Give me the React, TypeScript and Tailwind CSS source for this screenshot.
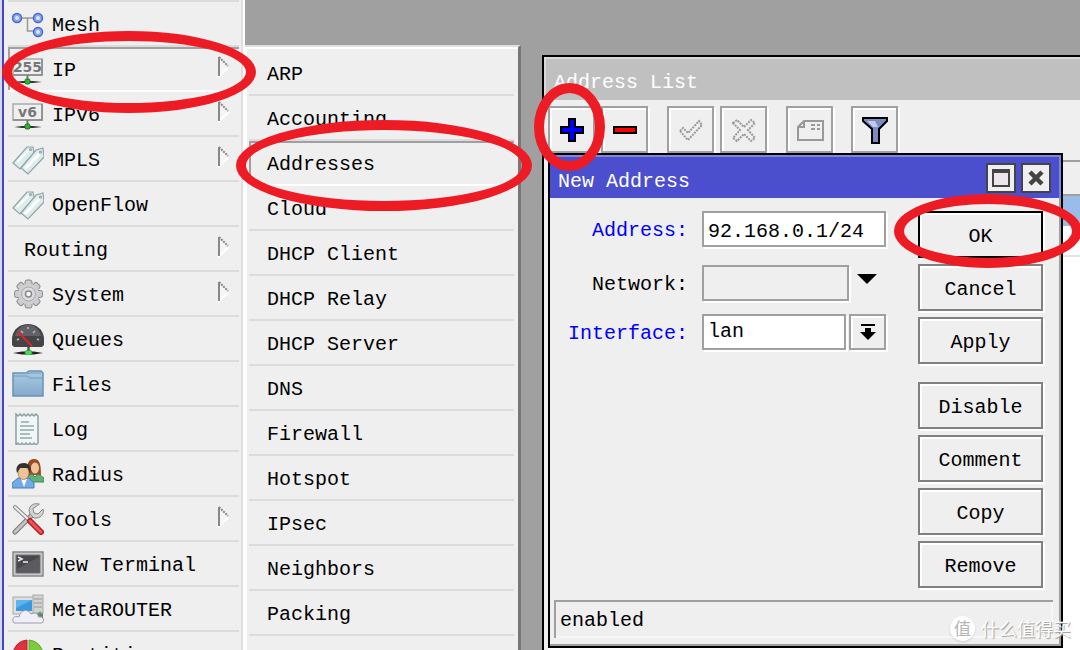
import type { ReactNode } from "react";

const menuItems: { label: string; icon?: ReactNode; sub?: boolean; active?: boolean }[] = [
  { label: "Mesh", icon: <MeshIcon /> },
  { label: "IP", icon: <NetIcon text="255" />, sub: true, active: true },
  { label: "IPv6", icon: <NetIcon text="v6" />, sub: true },
  { label: "MPLS", icon: <TagsIcon />, sub: true },
  { label: "OpenFlow", icon: <TagsIcon /> },
  { label: "Routing", sub: true },
  { label: "System", icon: <GearIcon />, sub: true },
  { label: "Queues", icon: <GaugeIcon /> },
  { label: "Files", icon: <FolderIcon /> },
  { label: "Log", icon: <LogIcon /> },
  { label: "Radius", icon: <UsersIcon /> },
  { label: "Tools", icon: <ToolsIcon />, sub: true },
  { label: "New Terminal", icon: <TerminalIcon /> },
  { label: "MetaROUTER", icon: <ComputerIcon /> },
  { label: "Partition", icon: <PieIcon /> },
];

const ipItems = [
  "ARP",
  "Accounting",
  "Addresses",
  "Cloud",
  "DHCP Client",
  "DHCP Relay",
  "DHCP Server",
  "DNS",
  "Firewall",
  "Hotspot",
  "IPsec",
  "Neighbors",
  "Packing",
  "Pool",
];

function MeshIcon() {
  return (
    <svg viewBox="0 0 32 32" className="size-8">
      <path d="M6 10H26M15.500 10V23H26" fill="none" stroke="#999" strokeWidth="1.500" />
      {[[5, 10], [26, 10], [26, 24]].map(([x, y]) => (
        <g key={`${x}-${y}`}>
          <circle cx={x} cy={y} r="4.500" fill="#86a6ef" stroke="#4a68cf" strokeWidth="1.500" />
          <circle cx={x} cy={y} r="2" fill="#dce6ff" />
        </g>
      ))}
    </svg>
  );
}

function NetIcon({ text }: { text: string }) {
  return (
    <svg viewBox="0 0 32 32" className="size-8">
      <rect x="1" y="6" width="29" height="16" fill="#efefef" stroke="#aaa" strokeWidth="1.500" />
      <path d="M1 22H30V6" fill="none" stroke="#888" strokeWidth="1.500" />
      <text x="15.500" y="19" textAnchor="middle" fontSize="14" fontWeight="bold" fontFamily="DejaVu Sans, sans-serif" fill="#777">
        {text}
      </text>
      <path d="M15.500 22V28" stroke="#777" strokeWidth="2" />
      <path d="M2 29L10 28H21L30 29L21 30H10Z" fill="#333" />
      <rect x="13" y="26" width="5" height="5" rx="1.500" fill="#35b235" stroke="#18711c" />
    </svg>
  );
}

function TagsIcon() {
  return (
    <svg viewBox="0 0 32 32" className="size-8" fill="#dfecec" stroke="#8fa5a8" strokeWidth="1.200">
      <path d="M1 20L15 4L21 4L22 10L8 26Z" />
      <path d="M5 19L17 7" stroke="#fff" strokeWidth="2" />
      <path d="M9 25L24 7L31 5L32 14L16 31Z" />
      <path d="M13 26L27 11" stroke="#fff" strokeWidth="3" />
      <circle cx="18.500" cy="6.500" r="1" fill="#fff" />
      <circle cx="28.500" cy="9" r="1" fill="#fff" />
    </svg>
  );
}

function GearIcon() {
  return (
    <svg viewBox="0 0 32 32" className="size-8">
      {[0, 45, 90, 135].map((a) => (
        <rect key={a} x="13" y="2" width="7" height="28" rx="2" fill="#ccc" stroke="#888" transform={`rotate(${a} 16.500 16)`} />
      ))}
      <circle cx="16.500" cy="16" r="10.500" fill="#cfcfd3" />
      <circle cx="16.500" cy="16" r="7" fill="#dcdce0" stroke="#aaa" />
      <circle cx="16.500" cy="16" r="3" fill="#fff" stroke="#888" strokeWidth="1.500" />
    </svg>
  );
}

function GaugeIcon() {
  return (
    <svg viewBox="0 0 32 32" className="size-8">
      <path d="M0 22V15C1 6 8 1 16 1S31 6 32 15V22L30 24H2Z" fill="#454549" />
      <path d="M3 13C5 6 10 2 16 2S27 6 29 13Z" fill="#626266" />
      <path d="M5 17L7 16M9 8L11 10M16 4V6M23 8L21 10M27 17L25 16" stroke="#bbb" strokeWidth="1.500" />
      <path d="M6 9L20 23" stroke="#e32222" strokeWidth="2" />
      <path d="M16.500 24V29" stroke="#555" strokeWidth="2.500" />
      <path d="M1 30L10 28.500H22L31 30L22 31.500H10Z" fill="#222" />
      <rect x="13" y="27.500" width="7" height="4.500" rx="2" fill="#43dc52" stroke="#239330" strokeWidth=".7" />
    </svg>
  );
}

function FolderIcon() {
  return (
    <svg viewBox="0 0 32 32" className="size-8">
      <defs>
        <linearGradient id="folder" x2="0" y2="1">
          <stop stopColor="#a9cbe2" />
          <stop offset="1" stopColor="#86a9ce" />
        </linearGradient>
      </defs>
      <path d="M1 5H14L17 3H29L31 5V28H1Z" fill="url(#folder)" stroke="#6992b1" strokeWidth="1.500" />
      <path d="M2 8H15L18 10H30M15 6L18 5H29" fill="none" stroke="#719eba" />
    </svg>
  );
}

function LogIcon() {
  return (
    <svg viewBox="0 0 32 32" className="size-8">
      <path d="M4 1L6 3L8 1L10 3L12 1L14 3L16 1L18 3L20 1L22 3L24 1L26 3V30L24 32L22 30L20 32L18 30L16 32L14 30L12 32L10 30L8 32L6 30L4 32Z" fill="#f0f7f6" stroke="#8ba2a1" strokeWidth="1.500" />
      <path d="M9 9H17M8 13H22M8 17H22M8 21H18M8 25H20" stroke="#91aaa9" strokeWidth="1.500" />
    </svg>
  );
}

function UsersIcon() {
  return (
    <svg viewBox="0 0 32 32" className="size-8">
      <path d="M16 14C15 6 16 1 22 1S29 7 29 17H16Z" fill="#9d4b23" />
      <ellipse cx="23" cy="10" rx="4" ry="5.500" fill="#f0c59b" />
      <path d="M13 24L16 18L20 16L23 19L26 16L32 20V24Z" fill="#5cb078" stroke="#43895a" />
      <path d="M0 30V25L6 20H17L22 25V30Z" fill="#72aae5" stroke="#477fc0" />
      <path d="M9 21L12 29L15 21Z" fill="#fff" />
      <ellipse cx="11.500" cy="15" rx="5.500" ry="6.500" fill="#efc393" stroke="#966743" strokeWidth=".7" />
      <path d="M5 15C3 8 7 5 12 5S20 9 18 15L16 10H8Z" fill="#33302f" />
    </svg>
  );
}

function ToolsIcon() {
  return (
    <svg viewBox="0 0 32 32" className="size-8" strokeLinecap="round">
      <path d="M3 29L20 12" stroke="#777" strokeWidth="5" />
      <path d="M3 29L20 12" stroke="#c2c2c2" strokeWidth="3" />
      <path d="M27 1C20 -1 15 5 18 11L22 15C28 16 33 11 31 6L26 11L22 10L21 6Z" fill="#d3d3d3" stroke="#888" />
      <path d="M3 4L17 17" stroke="#888" strokeWidth="4" />
      <path d="M3 4L17 17" stroke="#ededed" strokeWidth="2" />
      <path d="M18 18L29 29" stroke="#b91e1e" strokeWidth="6" />
      <path d="M18 18L29 29" stroke="#ee5555" strokeWidth="3" />
    </svg>
  );
}

function TerminalIcon() {
  return (
    <svg viewBox="0 0 32 32" className="size-8">
      <rect x="1" y="4" width="30" height="24" fill="#c9c9c9" stroke="#888" strokeWidth="1.500" />
      <rect x="4" y="7" width="24" height="18" fill="#48484c" stroke="#777" />
      <path d="M5 21L27 9V24H5Z" fill="#5b5b60" />
      <path d="M6 9L10 11L6 13M11 14H16" stroke="#eee" strokeWidth="1.500" fill="none" />
    </svg>
  );
}

function ComputerIcon() {
  return (
    <svg viewBox="0 0 32 32" className="size-8">
      <rect x="1" y="4" width="22" height="17" fill="#dedede" stroke="#aaa" />
      <rect x="4" y="7" width="16" height="11" fill="#3899df" />
      <path d="M4 7H20L4 15Z" fill="#5fb4eb" />
      <path d="M24 19H31V26H24Z" fill="#777" />
      <rect x="21" y="2" width="10" height="18" fill="#d2d2d2" stroke="#aaa" />
      <path d="M22 6H30M22 10H30M22 14H30" stroke="#999" />
      <circle cx="28" cy="20" r="1.500" fill="#34c144" />
      <path d="M2 30C-1 26 2 22 7 24C8 17 16 15 19 21C25 18 27 23 26 24C32 23 33 28 30 30Z" fill="#efeff8" stroke="#9c9cb2" />
    </svg>
  );
}

function PieIcon() {
  return (
    <svg viewBox="0 0 32 32" className="size-8">
      <path d="M15 16V2A15 15 0 0 0 1 16Z" fill="#e0323c" stroke="#bd1f30" />
      <path d="M17 16V2A15 15 0 0 1 31 16Z" fill="#7fcb40" stroke="#5da62e" />
      <path d="M1 17H15V31A15 15 0 0 1 1 17Z" fill="#e8c83a" />
      <path d="M17 17H31A15 15 0 0 1 17 31Z" fill="#4a8fe0" />
    </svg>
  );
}

function SubArrow() {
  return (
    <svg viewBox="0 0 14 22" className="mb-1 ml-auto mr-2 h-[22px] w-[14px]" fill="none" strokeWidth="2">
      <path d="M3 4L12 11L2 20Z" fill="#f5f5f5" />
      <path d="M1 21L12 11" stroke="#fff" />
      <path d="M2 1V20" stroke="#888" />
      <path d="M2 1L11 10" stroke="#888" strokeDasharray="2 1" />
    </svg>
  );
}

function ToolButton({ label, className = "", children }: { label: string; className?: string; children: ReactNode }) {
  return (
    <button
      aria-label={label}
      className={`flex size-[47px] items-center justify-center border-2 border-[#a0a0a0] bg-[#efefef] shadow-[2px_2px_0_#fff,inset_2px_2px_0_#fff] ${className}`}
    >
      <svg viewBox="0 0 28 28" className="size-7">
        {children}
      </svg>
    </button>
  );
}

function DialogButton({ label, primary, className = "" }: { label: string; primary?: boolean; className?: string }) {
  return (
    <button
      className={`h-[47px] border-2 bg-[#efefef] pt-1 shadow-[2px_2px_0_#fff,inset_2px_2px_0_#fff] ${primary ? "border-black" : "border-[#808080]"} ${className}`}
    >
      {label}
    </button>
  );
}

function Ring({ className }: { className: string }) {
  return <div className={`pointer-events-none absolute rounded-[50%] border-[10px] border-[#ed1c24] ${className}`} />;
}

function Sidebar() {
  return (
    <nav className="flex w-[245px] shrink-0 border-r-2 border-r-white bg-[#d5d9e5] pl-[2px]">
      <div className="w-full border-l-2 border-[#4444c8] bg-[#efefef] pl-1 pr-1 shadow-[inset_-2px_0_0_#dfdfdf]">
        <ul className="border-t-2 border-[#dcdcdc]">
          {menuItems.map((item) => (
            <li
              key={item.label}
              className={`h-[45px] border-b-2 ${item.active ? "border-b-white shadow-[inset_2px_2px_0_#a0a0a0]" : "border-[#dcdcdc]"}`}
            >
              <a href="#" className={`flex h-full items-center gap-2 ${item.icon ? "pl-1" : "pl-4"}`}>
                {item.icon}
                <span className="pt-1">{item.label}</span>
                {item.sub && <SubArrow />}
              </a>
            </li>
          ))}
        </ul>
      </div>
    </nav>
  );
}

function IpMenu() {
  return (
    <nav className="mt-[45px] w-[276px] shrink-0 border-r-[3px] border-t-2 border-r-[#777] border-t-[#dfdfdf] bg-[#efefef] pl-1 pr-1 pt-1 shadow-[inset_2px_2px_0_#fff]">
      <ul>
        {ipItems.map((item) => (
          <li
            key={item}
            className={`h-[45px] border-b-2 ${item === "Addresses" ? "border-b-white shadow-[inset_2px_2px_0_#a0a0a0]" : "border-[#dcdcdc]"}`}
          >
            <a href="#" className="flex h-full items-center pl-[18px] pt-1">
              {item}
            </a>
          </li>
        ))}
      </ul>
    </nav>
  );
}

function NewAddress() {
  return (
    <section className="absolute left-1 top-[96px] flex w-[515px] flex-col border-2 border-black bg-[#efefef] shadow-[inset_-2px_-2px_0_#a0a0a0]">
      <header className="flex h-[43px] items-center justify-between border-r-2 border-t-2 border-[#8585d8] bg-[#4c4fcd] px-2 text-white">
        <h2 className="pt-2">New Address</h2>
        <div className="flex gap-[5px]">
          <button aria-label="Maximize" className="flex size-[30px] items-center justify-center border-2 border-[#444] bg-[#efefef]">
            <span className="size-[18px] border-2 border-t-4 border-[#444] bg-[#ece6ec]" />
          </button>
          <button aria-label="Close" className="flex size-[30px] items-center justify-center border-2 border-[#444] bg-[#efefef]">
            <svg viewBox="0 0 16 16" className="size-4">
              <path d="M2 2L14 14M14 2L2 14" stroke="#444" strokeWidth="4.500" />
            </svg>
          </button>
        </div>
      </header>
      <div className="flex justify-between pb-3 pl-4 pr-[18px] pt-[13px]">
        <form className="grid grid-cols-[122px_184px] content-start gap-x-[14px]">
          <label htmlFor="address" className="h-[54px] pt-[6px] text-right text-[#0000ff]">Address:</label>
          <input id="address" defaultValue="92.168.0.1/24" className="h-9 w-full border-2 border-[#a0a0a0] bg-white px-1 pt-1 shadow-[2px_2px_0_#fff]" />
          <label htmlFor="network" className="h-[49px] pt-[6px] text-right">Network:</label>
          <div className="flex gap-2">
            <input id="network" className="h-9 w-[147px] border-2 border-[#a0a0a0] bg-[#efefef] px-1 shadow-[2px_2px_0_#fff]" />
            <button type="button" aria-label="Show network" className="flex h-7 w-5 items-center justify-center">
              <svg viewBox="0 0 20 10" className="h-[10px] w-5">
                <path d="M0 0H20L10 10Z" />
              </svg>
            </button>
          </div>
          <label htmlFor="interface" className="pt-[6px] text-right text-[#0000ff]">Interface:</label>
          <div className="flex justify-between">
            <select id="interface" className="h-9 w-36 appearance-none border-2 border-[#a0a0a0] bg-white px-1 shadow-[2px_2px_0_#fff]">
              <option>lan</option>
            </select>
            <button type="button" aria-label="Choose interface" className="flex h-9 w-[37px] items-center justify-center border-2 border-[#a0a0a0] shadow-[2px_2px_0_#fff,inset_2px_2px_0_#fff]">
              <svg viewBox="0 0 16 18" className="h-[18px] w-4">
                <path d="M1 1H15V3H1ZM5 5H11V9H16L8 17L0 9H5Z" />
              </svg>
            </button>
          </div>
        </form>
        <div className="flex w-[125px] flex-col gap-[6px]">
          <DialogButton label="OK" primary />
          <DialogButton label="Cancel" />
          <DialogButton label="Apply" />
          <DialogButton label="Disable" className="mt-3" />
          <DialogButton label="Comment" />
          <DialogButton label="Copy" />
          <DialogButton label="Remove" />
        </div>
      </div>
      <footer className="mb-2 ml-1 mr-2 h-[38px] border-l-2 border-t-2 border-[#a0a0a0] px-1 leading-[38px] shadow-[inset_-2px_-2px_0_#f7f7f7]">
        enabled
      </footer>
    </section>
  );
}

function AddressList() {
  return (
    <section className="relative ml-[21px] mt-[55px] flex grow flex-col border-l-2 border-t-2 border-black bg-[#efefef]">
      <header className="h-[43px] border-l-2 border-t-2 border-[#d8d8d8] bg-[#c0c0c0] pl-2 leading-[48px] text-white">
        <h1>Address List</h1>
      </header>
      <div className="flex h-[60px] shrink-0 pl-1 pt-[6px]">
        <ToolButton label="Add">
          <path d="M11 3H17V11H25V17H17V25H11V17H3V11H11Z" fill="#00f" stroke="#000" strokeWidth="2" />
        </ToolButton>
        <ToolButton label="Remove" className="ml-[6px]">
          <path d="M3 11H25V17H3Z" fill="#f00" stroke="#000" strokeWidth="2" />
        </ToolButton>
        <ToolButton label="Enable" className="ml-[19px]">
          <path d="M3 15L6 12L11 17L22 5L25 9L11 24Z" fill="none" stroke="#999" strokeWidth="2" strokeDasharray="2 1" />
        </ToolButton>
        <ToolButton label="Disable" className="ml-[6px]">
          <path d="M3 7L7 4L14 11L21 4L25 7L18 14L25 22L21 25L14 18L7 25L3 22L10 14Z" fill="none" stroke="#999" strokeWidth="2" strokeDasharray="2 1" />
        </ToolButton>
        <ToolButton label="Comment" className="ml-[19px]">
          <path d="M2 11L8 5H27V24H2ZM8 5V11H2M15 9H19M21 9H24M15 13H19M21 13H24" fill="none" stroke="#999" strokeWidth="2" />
        </ToolButton>
        <ToolButton label="Filter" className="ml-[18px]">
          <path d="M2 2H26V5L18 13V27H11V13L2 5Z" fill="#7b8cc3" stroke="#000" strokeWidth="2" />
          <path d="M6 5H14L17 11H12Z" fill="#c3cbec" />
        </ToolButton>
      </div>
      <div className="ml-1 grow bg-white">
        <div className="h-[36px] border-b-2 border-t-2 border-[#a0a0a0] bg-[#efefef]" />
        <div className="h-[30px] bg-[#9abce8]" />
        <div className="h-[31px] border-b-2 border-[#e5e5e5]" />
      </div>
      <NewAddress />
    </section>
  );
}

export default function App() {
  return (
    <main className="relative flex h-screen overflow-hidden bg-[#a0a0a0] font-['Liberation_Mono',monospace] text-[20px] leading-7 text-black">
      <Sidebar />
      <IpMenu />
      <AddressList />

      <Ring className="left-[2px] top-[31px] h-[82px] w-[254px]" />
      <Ring className="left-[236px] top-[120px] h-[91px] w-[296px]" />
      <Ring className="left-[534px] top-[83px] h-[88px] w-[71px]" />
      <Ring className="left-[894px] top-[194px] h-[74px] w-[188px]" />

      <div className="absolute bottom-2 right-[9px] flex items-center gap-[6px] font-['Noto_Sans_CJK_SC',sans-serif] text-[18px] text-white [text-shadow:1px_1px_1px_#999]">
        <span className="flex size-[25px] items-center justify-center rounded-full bg-white text-[17px] text-[#b5b5b5] shadow-sm [text-shadow:none]">值</span>
        <span>什么值得买</span>
      </div>
    </main>
  );
}
